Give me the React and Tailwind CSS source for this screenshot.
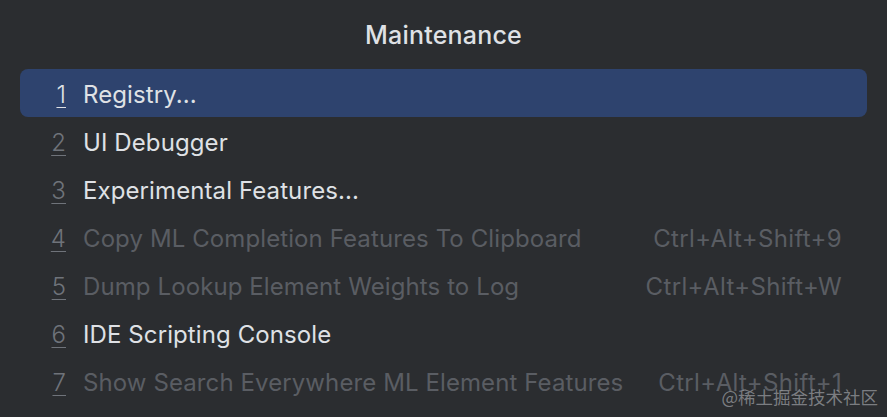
import React from 'react';

const items = [
  { n: '1', label: 'Registry...', selected: true },
  { n: '2', label: 'UI Debugger' },
  { n: '3', label: 'Experimental Features...' },
  { n: '4', label: 'Copy ML Completion Features To Clipboard', shortcut: 'Ctrl+Alt+Shift+9', disabled: true },
  { n: '5', label: 'Dump Lookup Element Weights to Log', shortcut: 'Ctrl+Alt+Shift+W', disabled: true },
  { n: '6', label: 'IDE Scripting Console' },
  { n: '7', label: 'Show Search Everywhere ML Element Features', shortcut: 'Ctrl+Alt+Shift+1', disabled: true },
];

export default function App() {
  return (
    <div className="w-[887px] h-[417px] bg-[#2b2d30] overflow-hidden flex flex-col font-['Inter','Noto_Sans',sans-serif] relative">
      <div className="h-[69px] flex items-center justify-center pt-[3px]">
        <h1 className="text-[25px] font-medium text-[#dfe1e5] tracking-[0.2px]">Maintenance</h1>
      </div>
      <div className="flex flex-col px-5">
        {items.map((item) => (
          <div
            key={item.n}
            className={`h-12 flex items-center rounded-lg pr-[25px] pt-[3px] text-[24px] tracking-[0.1px] ${item.selected ? 'bg-[#2e436e]' : ''}`}
          >
            <span className="w-[63px] pr-[17px] text-right shrink-0">
              <span
                className={`font-light underline underline-offset-[4px] decoration-1 ${item.selected ? 'text-[#dfe1e5]' : 'text-[#6f737a]'}`}
              >
                {item.n}
              </span>
            </span>
            <span className={`flex-1 ${item.disabled ? 'text-[#5a5d63]' : 'text-[#dfe1e5]'}`}>{item.label}</span>
            {item.shortcut && <span className="text-[#5a5d63] tracking-[0.35px]">{item.shortcut}</span>}
          </div>
        ))}
      </div>
      <div className="absolute right-[9px] bottom-[7px] text-[17.5px] text-[#a0a2a6]/70 font-['Noto_Sans_CJK_SC',sans-serif]">
        @稀土掘金技术社区
      </div>
    </div>
  );
}
